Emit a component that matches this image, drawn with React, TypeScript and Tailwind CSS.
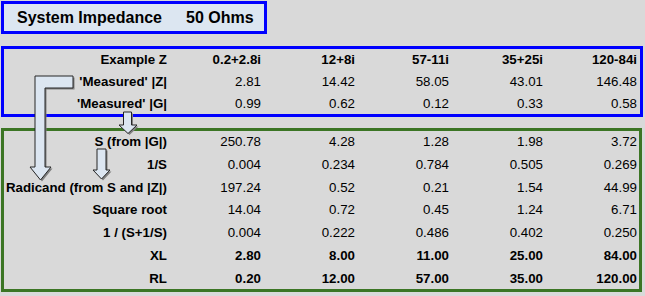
const header = ["0.2+2.8i", "12+8i", "57-11i", "35+25i", "120-84i"]

const blueRows = [
  { label: "Example Z", values: header, bold: true },
  { label: "'Measured' |Z|", values: ["2.81", "14.42", "58.05", "43.01", "146.48"] },
  { label: "'Measured' |G|", values: ["0.99", "0.62", "0.12", "0.33", "0.58"] },
]

const greenRows = [
  { label: "S (from |G|)", values: ["250.78", "4.28", "1.28", "1.98", "3.72"] },
  { label: "1/S", values: ["0.004", "0.234", "0.784", "0.505", "0.269"] },
  { label: "Radicand (from S and |Z|)", values: ["197.24", "0.52", "0.21", "1.54", "44.99"] },
  { label: "Square root", values: ["14.04", "0.72", "0.45", "1.24", "6.71"] },
  { label: "1 / (S+1/S)", values: ["0.004", "0.222", "0.486", "0.402", "0.250"] },
  { label: "XL", values: ["2.80", "8.00", "11.00", "25.00", "84.00"], bold: true },
  { label: "RL", values: ["0.20", "12.00", "57.00", "35.00", "120.00"], bold: true },
]

type Row = { label: string; values: string[]; bold?: boolean }

function Rows({ rows, rowH }: { rows: Row[]; rowH: string }) {
  return (
    <div className="grid grid-cols-[163px_repeat(5,94px)]">
      {rows.map((r) => (
        <div key={r.label} className="contents">
          <div className={`${rowH} flex items-center justify-end font-bold whitespace-nowrap`}>{r.label}</div>
          {r.values.map((v, i) => (
            <div key={i} className={`${rowH} flex items-center justify-end ${r.bold ? "font-bold" : ""}`}>
              {v}
            </div>
          ))}
        </div>
      ))}
    </div>
  )
}

function Arrows() {
  const big = "35,76 73,76 73,88 45,88 45,167 51,167 40.5,180 30,167 35,167"
  const small1 = "123.5,112 131.5,112 131.5,125 137,125 128,133.5 119,125 123.5,125"
  const small2 = "97,149 106,149 106,170 110,170 101.5,179 93,170 97,170"
  return (
    <svg className="absolute left-0 top-0 pointer-events-none" width="645" height="296">
      {[big, small1, small2].map((p, i) => (
        <g key={i}>
          <polygon points={p} transform="translate(1.5,1.5)" fill="#808080" />
          <polygon points={p} fill="#dce6f1" stroke="#262626" strokeWidth="1" />
        </g>
      ))}
    </svg>
  )
}

export default function App() {
  return (
    <div className="relative w-[645px] h-[296px] overflow-hidden bg-[#d9d9d9] text-black font-['Liberation_Sans',Arial,sans-serif] text-[13.3px]">
      <div className="flex flex-col pl-[1px] pt-[1px]">
        <div className="w-[266px] h-[33px] border-[3px] border-[#0000ff] bg-[#dce6f1] flex items-center font-bold text-[16px]">
          <span className="ml-[13px] w-[169px]">System Impedance</span>
          <span>50 Ohms</span>
        </div>
        <div className="mt-[12px] w-[642px] h-[71px] border-[3px] border-[#0000ff]">
          <Rows rows={blueRows} rowH="h-[22px]" />
        </div>
        <div className="mt-[11px] w-[641px] h-[164px] border-[3px] border-[#3b7524]">
          <Rows rows={greenRows} rowH="h-[22.7px]" />
        </div>
      </div>
      <Arrows />
    </div>
  )
}
